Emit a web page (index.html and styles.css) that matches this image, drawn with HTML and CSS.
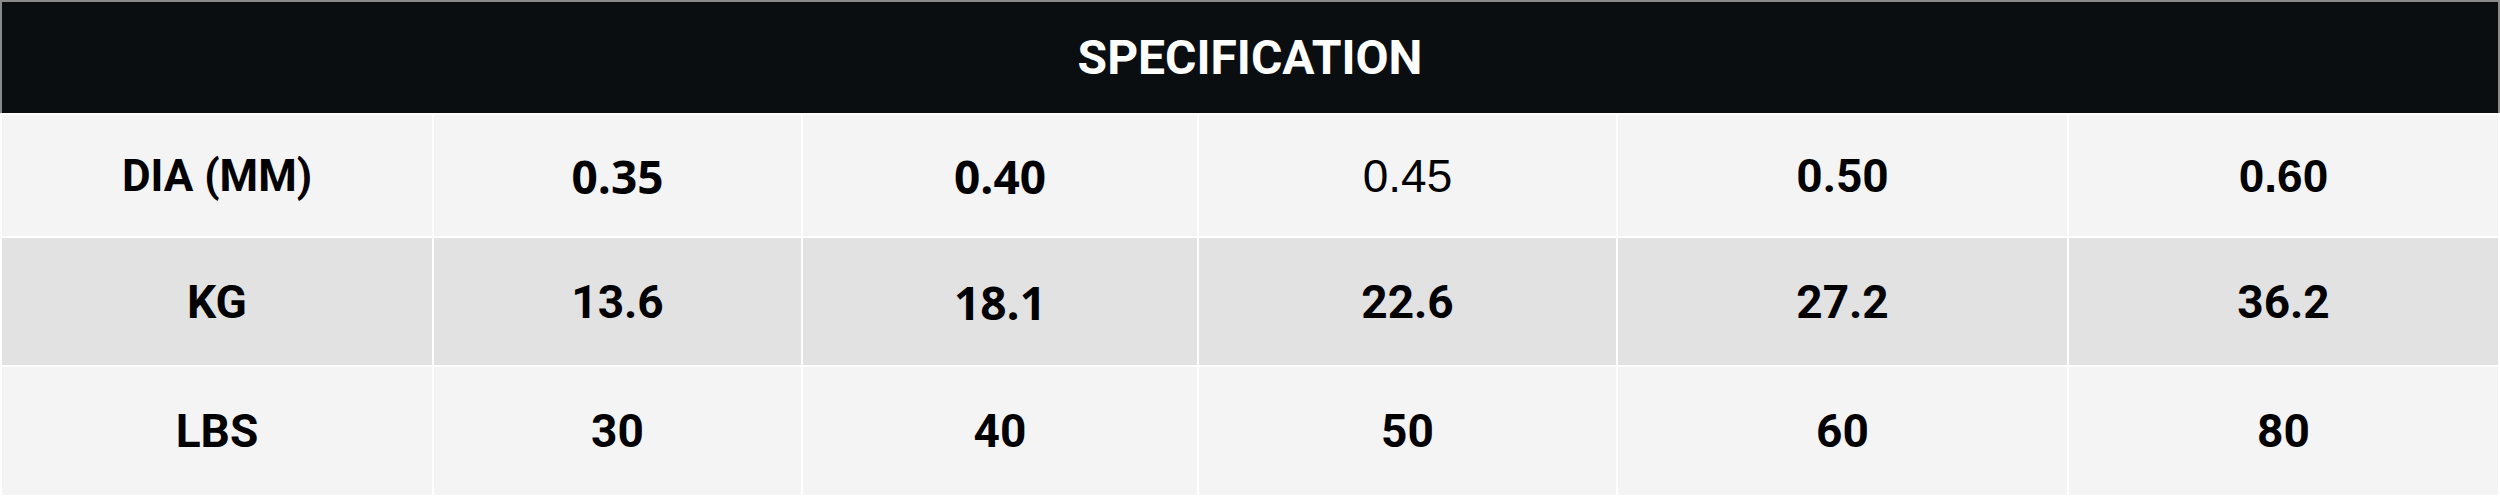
FILE: index.html
```html
<!DOCTYPE html>
<html lang="en">
<head>
<meta charset="utf-8">
<title>Specification</title>
<link rel="stylesheet" href="styles.css">
</head>
<body>
<table class="spec">
  <caption class="spec-title">SPECIFICATION</caption>
  <colgroup>
    <col class="c1"><col class="c2"><col class="c3"><col class="c4"><col class="c5"><col class="c6">
  </colgroup>
  <tbody>
    <tr class="row row-a">
      <th class="f-dia">DIA (MM)</th>
      <td class="f-open">0.35</td>
      <td class="f-open">0.40</td>
      <td class="f-lib-reg">0.45</td>
      <td class="f-roboto">0.50</td>
      <td class="f-lib">0.60</td>
    </tr>
    <tr class="row row-b">
      <th class="f-roboto">KG</th>
      <td class="f-roboto">13.6</td>
      <td class="f-open">18.1</td>
      <td class="f-roboto">22.6</td>
      <td class="f-roboto">27.2</td>
      <td class="f-roboto">36.2</td>
    </tr>
    <tr class="row row-c">
      <th class="f-roboto">LBS</th>
      <td class="f-roboto">30</td>
      <td class="f-roboto">40</td>
      <td class="f-roboto">50</td>
      <td class="f-roboto">60</td>
      <td class="f-roboto">80</td>
    </tr>
  </tbody>
</table>
</body>
</html>
```
FILE: styles.css
```css
html, body {
  margin: 0;
  padding: 0;
  background: #ffffff;
}

.spec {
  width: 2500px;
  table-layout: fixed;
  border-collapse: separate;
  border-spacing: 2px;
  color: #000;
}

.spec-title {
  background: #0a0e11;
  color: #ffffff;
  border: 2px solid #8a8a8a;
  border-bottom: 0;
  height: 111px;
  line-height: 111px;
  padding: 0;
  font-family: Roboto, sans-serif;
  font-weight: 700;
  font-size: 48px;
  text-align: center;
}

.c1 { width: 430px; }
.c2 { width: 367px; }
.c3 { width: 394px; }
.c4 { width: 417px; }
.c5 { width: 449px; }
.c6 { width: 429px; }

.spec th,
.spec td {
  padding: 0;
  text-align: center;
  vertical-align: middle;
  font-size: 46px;
  font-weight: 700;
}

.row-a { height: 121px; background: #f4f4f4; }
.row-b { height: 127px; background: #e2e2e2; }
.row-c { height: 128px; background: #f4f4f4; }

.f-open { font-family: "Open Sans", sans-serif; }
.spec .f-dia { font-family: Roboto, sans-serif; font-size: 44px; }
.f-roboto { font-family: Roboto, sans-serif; }
.f-lib { font-family: "Liberation Sans", Arial, sans-serif; }
.spec .f-lib-reg { font-family: "Liberation Sans", Arial, sans-serif; font-weight: 400; }
```
